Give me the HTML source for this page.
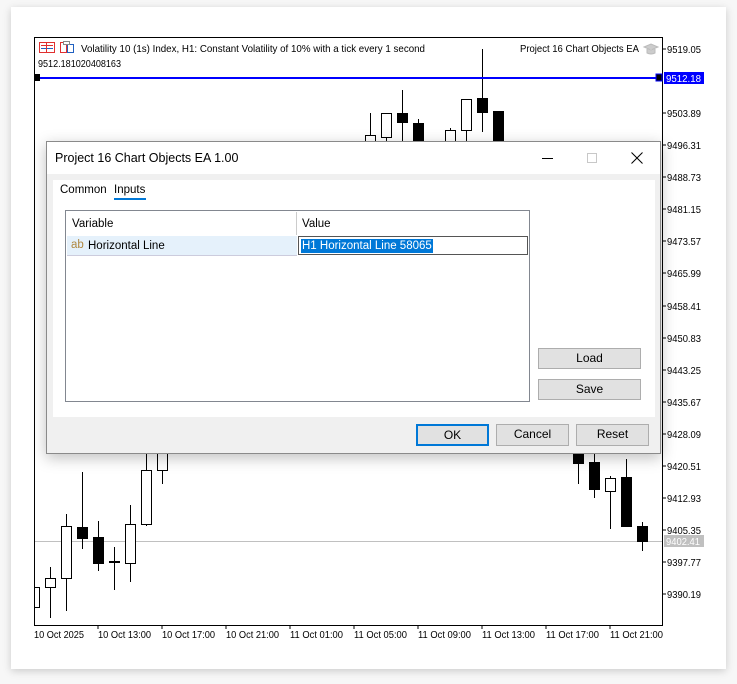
<!DOCTYPE html>
<html><head><meta charset="utf-8"><style>
*{margin:0;padding:0;box-sizing:border-box}
body{width:737px;height:684px;background:#f7f7f7;position:relative;overflow:hidden;font-family:"Liberation Sans",sans-serif}
.card{position:absolute;left:11px;top:7px;width:715px;height:662px;background:#fff;box-shadow:0 2px 8px rgba(0,0,0,.18)}
.a{position:absolute;white-space:nowrap}
.dlg{position:absolute;left:46px;top:141px;width:615px;height:313px;background:#f0f0f0;border:1px solid #8a8a8a;box-shadow:0 4px 14px rgba(0,0,0,.25)}
.btn{position:absolute;background:#e1e1e1;border:1px solid #adadad;font-size:12px;text-align:center;line-height:19px;color:#000}
</style></head><body>
<div class="card"></div>
<svg class="a" style="left:0;top:0" width="737" height="684" font-family="Liberation Sans, sans-serif" font-size="10.5">
<rect x="34.5" y="37.5" width="628" height="588" fill="none" stroke="#000"/>
<g stroke="#000" fill="#000">
<line x1="662" y1="49" x2="666" y2="49"/><line x1="662" y1="113" x2="666" y2="113"/><line x1="662" y1="145" x2="666" y2="145"/><line x1="662" y1="177" x2="666" y2="177"/><line x1="662" y1="209" x2="666" y2="209"/><line x1="662" y1="241" x2="666" y2="241"/><line x1="662" y1="273" x2="666" y2="273"/><line x1="662" y1="306" x2="666" y2="306"/><line x1="662" y1="338" x2="666" y2="338"/><line x1="662" y1="370" x2="666" y2="370"/><line x1="662" y1="402" x2="666" y2="402"/><line x1="662" y1="434" x2="666" y2="434"/><line x1="662" y1="466" x2="666" y2="466"/><line x1="662" y1="498" x2="666" y2="498"/><line x1="662" y1="530" x2="666" y2="530"/><line x1="662" y1="562" x2="666" y2="562"/><line x1="662" y1="594" x2="666" y2="594"/>
<line x1="98" y1="625" x2="98" y2="629"/><line x1="162" y1="625" x2="162" y2="629"/><line x1="226" y1="625" x2="226" y2="629"/><line x1="290" y1="625" x2="290" y2="629"/><line x1="354" y1="625" x2="354" y2="629"/><line x1="418" y1="625" x2="418" y2="629"/><line x1="482" y1="625" x2="482" y2="629"/><line x1="546" y1="625" x2="546" y2="629"/><line x1="610" y1="625" x2="610" y2="629"/>
</g>
<g fill="#000" stroke="none" lengthAdjust="spacingAndGlyphs">
<text x="667" y="53" textLength="34" lengthAdjust="spacingAndGlyphs">9519.05</text><text x="667" y="117" textLength="34" lengthAdjust="spacingAndGlyphs">9503.89</text><text x="667" y="149" textLength="34" lengthAdjust="spacingAndGlyphs">9496.31</text><text x="667" y="181" textLength="34" lengthAdjust="spacingAndGlyphs">9488.73</text><text x="667" y="213" textLength="34" lengthAdjust="spacingAndGlyphs">9481.15</text><text x="667" y="245" textLength="34" lengthAdjust="spacingAndGlyphs">9473.57</text><text x="667" y="277" textLength="34" lengthAdjust="spacingAndGlyphs">9465.99</text><text x="667" y="310" textLength="34" lengthAdjust="spacingAndGlyphs">9458.41</text><text x="667" y="342" textLength="34" lengthAdjust="spacingAndGlyphs">9450.83</text><text x="667" y="374" textLength="34" lengthAdjust="spacingAndGlyphs">9443.25</text><text x="667" y="406" textLength="34" lengthAdjust="spacingAndGlyphs">9435.67</text><text x="667" y="438" textLength="34" lengthAdjust="spacingAndGlyphs">9428.09</text><text x="667" y="470" textLength="34" lengthAdjust="spacingAndGlyphs">9420.51</text><text x="667" y="502" textLength="34" lengthAdjust="spacingAndGlyphs">9412.93</text><text x="667" y="534" textLength="34" lengthAdjust="spacingAndGlyphs">9405.35</text><text x="667" y="566" textLength="34" lengthAdjust="spacingAndGlyphs">9397.77</text><text x="667" y="598" textLength="34" lengthAdjust="spacingAndGlyphs">9390.19</text>
<text x="34" y="638" textLength="50" lengthAdjust="spacingAndGlyphs">10 Oct 2025</text><text x="98" y="638" textLength="53" lengthAdjust="spacingAndGlyphs">10 Oct 13:00</text><text x="162" y="638" textLength="53" lengthAdjust="spacingAndGlyphs">10 Oct 17:00</text><text x="226" y="638" textLength="53" lengthAdjust="spacingAndGlyphs">10 Oct 21:00</text><text x="290" y="638" textLength="53" lengthAdjust="spacingAndGlyphs">11 Oct 01:00</text><text x="354" y="638" textLength="53" lengthAdjust="spacingAndGlyphs">11 Oct 05:00</text><text x="418" y="638" textLength="53" lengthAdjust="spacingAndGlyphs">11 Oct 09:00</text><text x="482" y="638" textLength="53" lengthAdjust="spacingAndGlyphs">11 Oct 13:00</text><text x="546" y="638" textLength="53" lengthAdjust="spacingAndGlyphs">11 Oct 17:00</text><text x="610" y="638" textLength="53" lengthAdjust="spacingAndGlyphs">11 Oct 21:00</text>
</g>
<line x1="35" y1="541.5" x2="662" y2="541.5" stroke="#c0c0c0"/>
<rect x="664" y="535" width="40" height="12" fill="#c0c0c0"/><text x="666" y="545" fill="#fff" textLength="34" lengthAdjust="spacingAndGlyphs">9402.41</text>
<g stroke="#000" stroke-width="1">
<line x1="50.5" y1="567" x2="50.5" y2="618"/><line x1="66.5" y1="514" x2="66.5" y2="611"/><line x1="82.5" y1="472" x2="82.5" y2="549"/><line x1="98.5" y1="521" x2="98.5" y2="571"/><line x1="114.5" y1="547" x2="114.5" y2="590"/><line x1="130.5" y1="505" x2="130.5" y2="582"/><line x1="146.5" y1="453" x2="146.5" y2="526"/><line x1="162.5" y1="453" x2="162.5" y2="484"/>
<line x1="578.5" y1="453" x2="578.5" y2="484"/><line x1="594.5" y1="453" x2="594.5" y2="498"/><line x1="610.5" y1="476" x2="610.5" y2="529"/><line x1="626.5" y1="459" x2="626.5" y2="527"/><line x1="642.5" y1="522" x2="642.5" y2="551"/>
<line x1="370.5" y1="113" x2="370.5" y2="141"/><line x1="386.5" y1="137" x2="386.5" y2="141"/><line x1="402.5" y1="90" x2="402.5" y2="141"/><line x1="418.5" y1="119" x2="418.5" y2="141"/><line x1="450.5" y1="128" x2="450.5" y2="141"/><line x1="466.5" y1="130" x2="466.5" y2="141"/><line x1="482.5" y1="49" x2="482.5" y2="132"/>
</g>
<g stroke="#000" fill="#fff">
<rect x="34.5" y="587.5" width="5" height="20"/><rect x="45.5" y="578.5" width="10" height="9"/><rect x="61.5" y="526.5" width="10" height="52"/><rect x="125.5" y="524.5" width="10" height="39"/><rect x="141.5" y="470.5" width="10" height="54"/><rect x="157.5" y="450" width="10" height="20.5"/><rect x="605.5" y="478.5" width="10" height="13"/>
<rect x="365.5" y="135.5" width="10" height="8"/><rect x="381.5" y="113.5" width="10" height="24"/><rect x="445.5" y="130.5" width="10" height="12"/><rect x="461.5" y="99.5" width="10" height="31"/>
</g>
<g fill="#000">
<rect x="77" y="527" width="11" height="12"/><rect x="93" y="537" width="11" height="27"/><rect x="109" y="561" width="11" height="2"/>
<rect x="573" y="450" width="11" height="14"/><rect x="589" y="462" width="11" height="28"/><rect x="621" y="477" width="11" height="50"/><rect x="637" y="526" width="11" height="16"/>
<rect x="397" y="113" width="11" height="10"/><rect x="413" y="123" width="11" height="20"/><rect x="477" y="98" width="11" height="15"/><rect x="493" y="111" width="11" height="32"/>
</g>
<line x1="35" y1="78" x2="662" y2="78" stroke="#0000ff" stroke-width="2"/>
<rect x="34" y="74" width="6" height="7" fill="#000"/><rect x="656" y="74" width="6" height="7" fill="#000" stroke="#00f"/>
<rect x="664" y="72" width="40" height="12" fill="#0000ff"/><text x="666" y="82" fill="#fff" textLength="35" lengthAdjust="spacingAndGlyphs">9512.18</text>
<rect x="39.5" y="42.5" width="15" height="10" fill="#fff" stroke="#e03030"/><line x1="41" y1="45.5" x2="53" y2="45.5" stroke="#e03030"/><line x1="41" y1="48.5" x2="53" y2="48.5" stroke="#2060c0"/><line x1="46.5" y1="43" x2="46.5" y2="52" stroke="#e03030"/>
<rect x="60.5" y="42.5" width="6" height="10" fill="#fff" stroke="#e03030"/><rect x="67.5" y="44.5" width="6" height="8" fill="#fff" stroke="#2060c0"/><rect x="63.5" y="41.5" width="6" height="3" fill="#fff" stroke="#888"/>
<text x="81" y="52" fill="#000" textLength="344" lengthAdjust="spacingAndGlyphs">Volatility 10 (1s) Index, H1:  Constant Volatility of 10% with a tick every 1 second</text>
<text x="38" y="67" fill="#000" textLength="83" lengthAdjust="spacingAndGlyphs">9512.181020408163</text>
<text x="520" y="52" fill="#000" textLength="119" lengthAdjust="spacingAndGlyphs">Project 16 Chart Objects EA</text>
<path d="M644 47 l7 -3 l7 3 l-7 3z M647 49 v4 q4 2 8 0 v-4" fill="#ccc" stroke="#bbb"/>
</svg>
<div class="dlg">
 <div class="a" style="left:0;top:0;width:613px;height:32px;background:#fff"></div>
 <div class="a" style="left:8px;top:9px;font-size:12.5px;color:#000">Project 16 Chart Objects EA 1.00</div>
 <div class="a" style="left:495px;top:16px;width:11px;height:1px;background:#000"></div>
 <div class="a" style="left:540px;top:11px;width:10px;height:10px;border:1px solid #c8c8c8"></div>
 <svg class="a" style="left:584px;top:10px" width="12" height="12"><path d="M0.5 0.5L11.5 11.5M11.5 0.5L0.5 11.5" stroke="#000"/></svg>
 <div class="a" style="left:6px;top:38px;width:602px;height:237px;background:#fff"></div>
 <div class="a" style="left:13px;top:42px;font-size:11.5px">Common</div>
 <div class="a" style="left:67px;top:42px;font-size:11.5px">Inputs</div>
 <div class="a" style="left:67px;top:56px;width:32px;height:2px;background:#0078d7"></div>
 <div class="a" style="left:18px;top:68px;width:465px;height:192px;border:1px solid #828790;background:#fff"></div>
 <div class="a" style="left:249px;top:70px;width:1px;height:23px;background:#ccc"></div>
 <div class="a" style="left:25px;top:76px;font-size:11.5px">Variable</div>
 <div class="a" style="left:255px;top:76px;font-size:11.5px">Value</div>
 <div class="a" style="left:20px;top:94px;width:230px;height:20px;background:#e5f1fb;border-bottom:1px solid #ccd"></div>
 <div class="a" style="left:24px;top:97px;font-size:11.5px;color:#b08840">ab</div>
 <div class="a" style="left:41px;top:98px;font-size:11.5px">Horizontal Line</div>
 <div class="a" style="left:251px;top:94px;width:230px;height:19px;border:1px solid #555;background:#fff"></div>
 <div class="a" style="left:254px;top:97px;font-size:11.5px;background:#0078d7;color:#fff;padding:0 1px;line-height:14px">H1 Horizontal Line 58065</div>
 <div class="btn" style="left:491px;top:206px;width:103px;height:21px">Load</div>
 <div class="btn" style="left:491px;top:237px;width:103px;height:21px">Save</div>
 <div class="btn" style="left:369px;top:282px;width:73px;height:22px;border:2px solid #0078d7;line-height:18px">OK</div>
 <div class="btn" style="left:449px;top:282px;width:73px;height:22px">Cancel</div>
 <div class="btn" style="left:529px;top:282px;width:73px;height:22px">Reset</div>
</div>
</body></html>
